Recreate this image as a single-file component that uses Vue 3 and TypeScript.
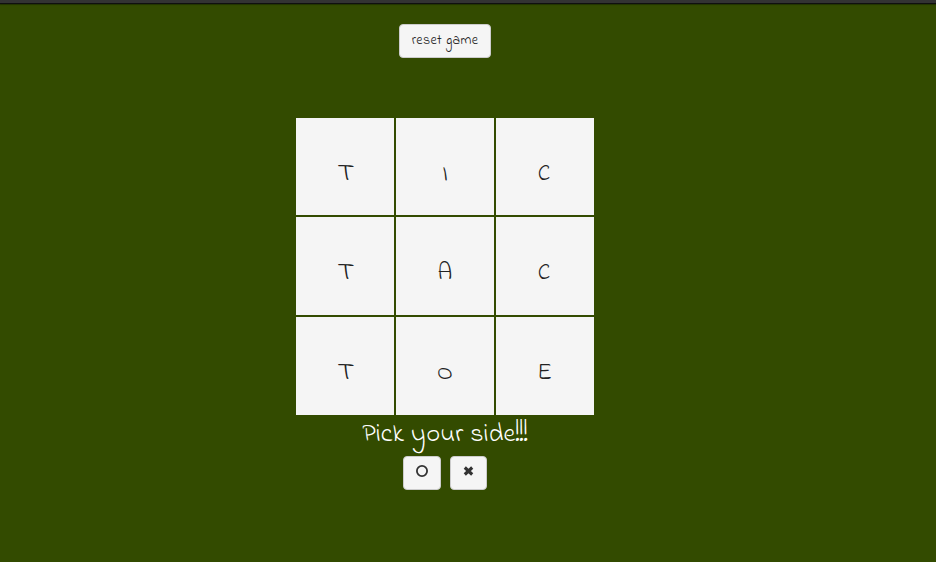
<script setup lang="ts">
const rows: string[][] = [
  ['T', 'I', 'C'],
  ['T', 'A', 'C'],
  ['T', 'O', 'E'],
]
</script>

<template>
  <main class="page">
    <div class="topbar"></div>
    <div class="game">
      <button class="btn reset"><span>reset game</span></button>
      <div class="board">
        <template v-for="(row, r) in rows" :key="r">
          <div v-for="(cell, c) in row" :key="c" class="cell" :class="{ first: r === 0 }">
            <span :class="['mark', 'mark-' + cell]">{{ cell }}</span>
          </div>
        </template>
      </div>
      <h3 class="prompt">Pick your side<span class="bangs">!!!</span></h3>
      <div class="sides">
        <button class="btn side side-o" aria-label="O">
          <svg width="12" height="12" viewBox="0 0 12 12"><circle cx="6" cy="6" r="5.1" fill="none" stroke="#333" stroke-width="1.8" /></svg>
        </button>
        <button class="btn side side-x" aria-label="X">
          <svg width="11" height="10" viewBox="0 0 11 10"><path d="M1.8 1.5 9.2 8.5M9.2 1.5 1.8 8.5" fill="none" stroke="#333" stroke-width="3.1" /></svg>
        </button>
      </div>
    </div>
  </main>
</template>

<style>
body {
  background: #334b00;
  overflow: hidden;
}
</style>

<style scoped>
.page {
  height: 562px;
  background: #334b00;
  font-family: 'Indie Flower', cursive;
  font-weight: 400;
  color: #333;
}
.topbar {
  box-sizing: border-box;
  height: 4px;
  background: #333;
  border-bottom: 1px solid #101010;
  box-shadow: 0 1px 1px #223300;
}
.game {
  width: 890px;
  padding-top: 20px;
  display: flex;
  flex-direction: column;
  align-items: center;
}
.btn {
  box-sizing: border-box;
  display: flex;
  align-items: center;
  justify-content: center;
  height: 34px;
  padding: 0;
  background: #f5f5f5;
  border: 1px solid #ccc;
  border-radius: 4px;
  color: #333;
  font: inherit;
}
.reset {
  width: 92px;
  font-size: 14px;
  letter-spacing: 0.35px;
  line-height: 20px;
  color: #222;
  white-space: nowrap;
}
.board {
  margin-top: 60px;
  display: grid;
  grid-template-columns: repeat(3, 98px);
  grid-template-rows: 97px 98px 98px;
  gap: 2px;
}
.cell {
  display: flex;
  align-items: center;
  justify-content: center;
  padding-top: 15px;
  box-sizing: border-box;
  background: #f5f5f5;
  color: #222;
  font-size: 24px;
  line-height: 26px;
}
.cell.first {
  padding-top: 17px;
}
.mark-T {
  transform: translateX(1px) scaleX(1.22);
}
.mark-C {
  transform: translateX(-0.5px) scaleX(0.95);
}
.mark-E {
  transform: translateX(-0.5px);
}
.prompt {
  margin: 0;
  height: 41px;
  font-size: 26px;
  font-weight: 400;
  line-height: 40px;
  letter-spacing: 0.24px;
  color: #fff;
  white-space: nowrap;
}
.bangs {
  display: inline-block;
  line-height: 1;
  transform: scaleY(1.2);
  transform-origin: 50% 80%;
}
.sides {
  display: flex;
  gap: 9px;
}
.side {
  padding-bottom: 4px;
}
.side-o {
  width: 38px;
}
.side-x {
  width: 37px;
}
</style>
